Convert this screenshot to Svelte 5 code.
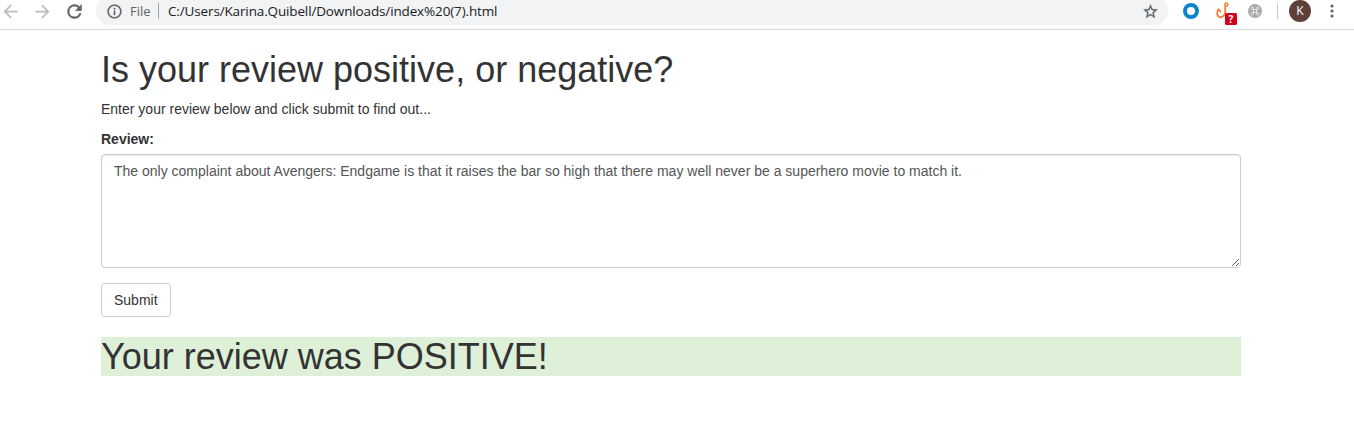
<script>
  let review = $state('The only complaint about Avengers: Endgame is that it raises the bar so high that there may well never be a superhero movie to match it.');
</script>

<div class="toolbar">
  <div class="row">
    <div class="nav">
      <svg class="dim" viewBox="0 0 24 24"><path d="M20 11H7.83l5.59-5.59L12 4l-8 8 8 8 1.41-1.41L7.83 13H20v-2z" /></svg>
      <svg class="dim" viewBox="0 0 24 24"><path d="M12 4l-1.41 1.41L16.17 11H4v2h12.17l-5.58 5.59L12 20l8-8z" /></svg>
      <svg viewBox="0 0 24 24"><path d="M17.65 6.35A7.96 7.96 0 0 0 12 4a8 8 0 1 0 7.73 10h-2.08A6 6 0 1 1 12 6c1.66 0 3.14.69 4.22 1.78L13 11h7V4l-2.35 2.35z" stroke="#5f6368" stroke-width=".5" /></svg>
    </div>
    <div class="address">
      <svg class="info" viewBox="0 0 24 24"><path d="M11 17h2v-6h-2v6zm1-15a10 10 0 1 0 0 20 10 10 0 0 0 0-20zm0 18a8 8 0 1 1 0-16 8 8 0 0 1 0 16zM11 9h2V7h-2v2z" stroke="#5f6368" stroke-width=".3" /></svg>
      <span class="scheme">File</span>
      <span class="bar"></span>
      <span class="url">C:/Users/Karina.Quibell/Downloads/index%20(7).html</span>
      <svg class="star" viewBox="0 0 24 24"><path d="M22 9.24l-7.19-.62L12 2 9.19 8.63 2 9.24l5.46 4.73L5.82 21 12 17.27 18.18 21l-1.63-7.03L22 9.24zM12 15.4l-3.76 2.27 1-4.28-3.32-2.88 4.38-.38L12 6.1l1.71 4.04 4.38.38-3.32 2.88 1 4.28L12 15.4z" stroke="#5f6368" stroke-width=".4" /></svg>
    </div>
    <div class="extensions">
      <span class="ring"></span>
      <svg class="hook" viewBox="0 0 24 24">
        <g fill="none" stroke="#fa7820" stroke-width="1.7" stroke-linecap="round" stroke-linejoin="round">
          <circle cx="11.300" cy="3.500" r="1.600" stroke-width="1.4" />
          <path d="M10.500 5.300C9.600 7.500 10.900 9.300 10 12 9.200 15.600 6 17 3.600 15.500 1.600 13.900 2 11 3.500 8.200l1.900 2.300" />
        </g>
        <rect x="10" y="12" width="12" height="12" rx="1.5" fill="#d0021b" />
        <text x="16" y="21.500" text-anchor="middle">?</text>
      </svg>
      <svg class="command" viewBox="0 0 14 14">
        <circle cx="7" cy="7" r="7" fill="#a9a9a9" />
        <path d="M5.500 5.500h3v3h-3zM5.500 5.500H4.300a1.200 1.200 0 1 1 1.200-1.200zM8.500 5.500V4.300a1.200 1.200 0 1 1 1.200 1.200zM8.500 8.500h1.200a1.200 1.200 0 1 1-1.200 1.200zM5.500 8.500v1.200a1.200 1.200 0 1 1-1.200-1.200z" fill="none" stroke="#eee" stroke-width=".9" />
      </svg>
      <span class="divider"></span>
      <span class="avatar">K</span>
      <svg class="menu" viewBox="0 0 4 14"><circle cx="2" cy="2" r="1.6" /><circle cx="2" cy="7" r="1.6" /><circle cx="2" cy="12" r="1.6" /></svg>
    </div>
  </div>
</div>

<main>
  <h1>Is your review positive, or negative?</h1>
  <p>Enter your review below and click submit to find out...</p>
  <label for="review">Review:</label>
  <textarea id="review" rows="5" spellcheck="false" bind:value={review}></textarea>
  <button type="button">Submit</button>
  <h1 class="result">Your review was POSITIVE!</h1>
</main>

<style>
  :global(body) { margin: 0; background: #fff; overflow: hidden; }
  .toolbar { height: 29px; border-bottom: 1px solid #d9dadb; overflow: hidden; font-family: "Open Sans", "Noto Sans", sans-serif; }
  .row { display: flex; align-items: center; height: 28px; margin-top: -3px; }
  svg { display: block; flex: none; fill: #5f6368; }
  .nav { display: flex; gap: 12px; width: 96px; flex: none; }
  .nav svg { width: 21px; height: 21px; margin: 0 -0.5px; }
  .nav .dim { fill: #babcbe; }
  .address { display: flex; align-items: center; box-sizing: border-box; width: 1072px; height: 28px; padding: 0 9px 0 10px; border-radius: 14px; background: #f1f3f4; font-size: 13.5px; line-height: 20px; white-space: nowrap; }
  .info { width: 17px; height: 17px; }
  .scheme { width: 28px; margin-left: 7px; color: #5f6368; font-size: 13px; }
  .bar { width: 1px; height: 16px; margin-right: 9px; background: #9aa0a6; }
  .url { color: #202124; letter-spacing: -0.14px; }
  .star { width: 17px; height: 17px; margin-left: auto; }
  .extensions { display: flex; align-items: center; flex: none; }
  .ring { box-sizing: border-box; width: 16px; height: 16px; margin-left: 15px; border: 4px solid #0a84cb; border-radius: 50%; }
  .hook { width: 24px; height: 24px; margin: 4px 0 0 16px; }
  .hook text { fill: #fff; font: bold 10px "Open Sans", sans-serif; }
  .command { width: 14px; height: 14px; margin-left: 9px; }
  .divider { width: 1px; height: 16px; margin-left: 15px; background: #c8cacc; }
  .avatar { width: 22px; height: 22px; margin-left: 11px; border-radius: 50%; background: #5d4037; color: #fff; font: 12px/22px "Open Sans", sans-serif; text-align: center; }
  .menu { width: 4px; height: 14px; margin-left: 19px; }

  main { width: 1140px; margin-left: 101px; padding-top: 20px; color: #333; font: 14px/20px "Liberation Sans", Arial, sans-serif; }
  h1 { margin: 0 0 9px; font-size: 36px; font-weight: 500; line-height: 1.1; }
  p { margin: 0 0 10px; }
  label { display: block; margin-bottom: 5px; font-weight: 700; }
  textarea { display: block; box-sizing: border-box; width: 100%; height: 114px; margin: 0 0 15px; padding: 6px 12px; border: 1px solid #ccc; border-radius: 4px; background: #fff; box-shadow: inset 0 1px 1px rgba(0, 0, 0, .075); color: #555; font: inherit; resize: vertical; outline: 0; }
  button { display: block; height: 34px; padding: 6px 12px; border: 1px solid #ccc; border-radius: 4px; background: #fff; color: #333; font: inherit; }
  .result { margin-top: 20px; background: #dff0d8; }
</style>
